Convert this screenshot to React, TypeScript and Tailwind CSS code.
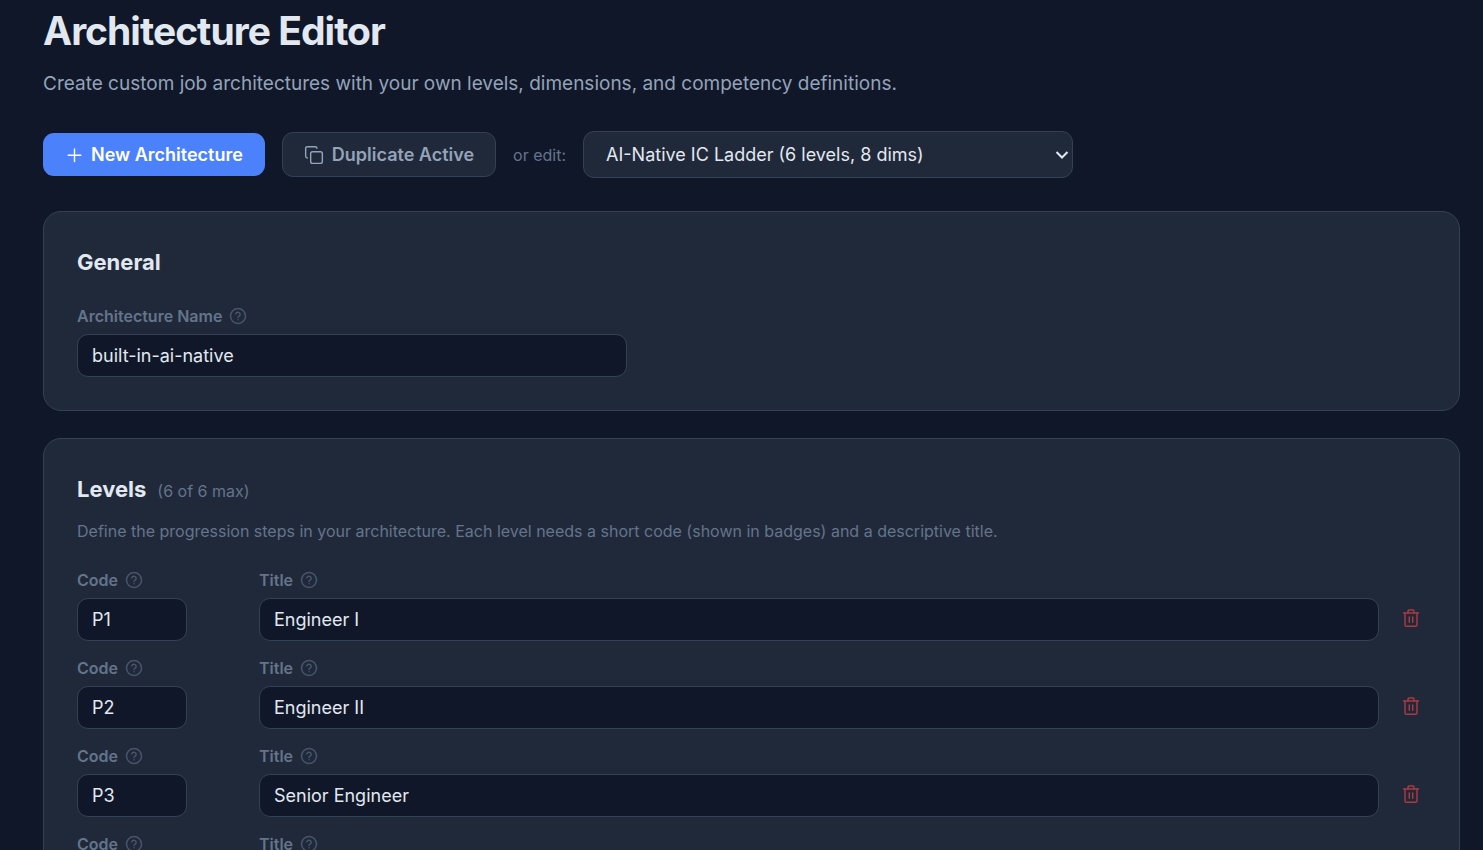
import { useId, useState } from "react";

type Level = { code: string; title: string };

const initialLevels: Level[] = [
  { code: "P1", title: "Engineer I" },
  { code: "P2", title: "Engineer II" },
  { code: "P3", title: "Senior Engineer" },
  { code: "P4", title: "Staff Engineer" },
];

function PlusIcon() {
  return (
    <svg className="size-[18px]" viewBox="0 0 18 18" fill="none" stroke="currentColor" strokeWidth="1.4" strokeLinecap="round" aria-hidden="true">
      <path d="M9.500 3v12.500M3.200 9.300h12.600" />
    </svg>
  );
}

function CopyIcon() {
  return (
    <svg className="size-5" viewBox="0 0 24 24" fill="none" stroke="currentColor" strokeWidth="1.7" strokeLinecap="round" strokeLinejoin="round" aria-hidden="true">
      <rect x="8" y="8" width="14" height="14" rx="2.200" />
      <path d="M4 15.500c-1.100 0-2-.9-2-2V4c0-1.100.9-2 2-2h9.500c1.100 0 2 .9 2 2" />
    </svg>
  );
}

function HelpIcon() {
  return (
    <svg className="size-[18px] text-[#475569]" viewBox="0 0 24 24" fill="none" stroke="currentColor" strokeWidth="2" strokeLinecap="round" strokeLinejoin="round" aria-hidden="true">
      <circle cx="12" cy="12" r="10" />
      <path d="M9.1 9a3 3 0 0 1 5.8 1c0 2-2.9 2.6-2.9 4" />
      <path d="M12 17h.01" />
    </svg>
  );
}

function TrashIcon() {
  return (
    <svg className="size-[20px]" viewBox="0 0 20 20" fill="none" stroke="currentColor" strokeWidth="1.5" strokeLinecap="round" strokeLinejoin="round" aria-hidden="true">
      <path d="M2.500 5h15" />
      <path d="M4 5v12c0 .8.600 1.300 1.300 1.300h9.400c.7 0 1.300-.5 1.300-1.300V5" />
      <path d="M7 5V3.300c0-.7.5-1.200 1.200-1.200h3.600c.7 0 1.200.5 1.200 1.200V5" />
      <path d="M8.300 9v5.300M11.700 9v5.300" />
    </svg>
  );
}

function Field({ label, value, className, onChange }: { label: string; value: string; className: string; onChange: (v: string) => void }) {
  const id = useId();
  return (
    <div className={className}>
      <div className="mb-[6px] flex h-6 items-center gap-[7px]">
        <label htmlFor={id} className="text-[16px] font-semibold text-[#64748b]">
          {label}
        </label>
        <HelpIcon />
      </div>
      <input
        id={id}
        type="text"
        value={value}
        onChange={(e) => onChange(e.target.value)}
        className="block h-[43px] w-full rounded-[11px] border border-[#334155] bg-[#101729] px-[14px] text-[18px] text-[#e2e8f0] outline-none focus:border-[#4b82fb]"
      />
    </div>
  );
}

export default function App() {
  const [name, setName] = useState("built-in-ai-native");
  const [levels, setLevels] = useState(initialLevels);

  const update = (index: number, patch: Partial<Level>) =>
    setLevels(levels.map((level, i) => (i === index ? { ...level, ...patch } : level)));

  return (
    <main className="min-h-screen bg-[#101729] pt-[7px] pr-[23px] pb-7 pl-[43px] font-['Inter',sans-serif] text-[#e2e8f0]">
      <h1 className="text-[39px] leading-[48px] font-bold tracking-tight">Architecture Editor</h1>
      <p className="mt-[14px] text-[19px] leading-[30px] text-[#94a3b8]">
        Create custom job architectures with your own levels, dimensions, and competency definitions.
      </p>

      <div className="mt-8 flex flex-wrap items-center gap-[17px]">
        <button type="button" className="flex h-[43px] items-center gap-2 rounded-[11px] bg-[#4b82fb] px-[22px] text-[18px] font-semibold text-white">
          <PlusIcon />
          New Architecture
        </button>
        <button type="button" className="flex h-[45px] items-center gap-2 rounded-[11px] border border-[#334155] bg-[#20293a] px-[21px] text-[18px] font-semibold text-[#94a3b8]">
          <CopyIcon />
          Duplicate Active
        </button>
        <label htmlFor="architecture" className="text-[16px] text-[#64748b]">
          or edit:
        </label>
        <div className="relative w-[490px] max-w-full">
          <select
            id="architecture"
            className="block h-[47px] w-full appearance-none rounded-[11px] border border-[#334155] bg-[#20293a] pr-8 pl-[22px] text-[18px] text-[#e2e8f0]"
          >
            <option>AI-Native IC Ladder (6 levels, 8 dims)</option>
          </select>
          <svg
            className="pointer-events-none absolute top-[19px] right-1 h-[10px] w-[14px]"
            viewBox="0 0 14 10"
            fill="none"
            stroke="currentColor"
            strokeWidth="2"
            aria-hidden="true"
          >
            <path d="M1.500 2L7 7.500L12.500 2" />
          </svg>
        </div>
      </div>

      <section className="mt-[33px] rounded-[18px] border border-[#334155] bg-[#20293a] p-[33px]">
        <h2 className="text-[22px] leading-[34px] font-bold">General</h2>
        <Field label="Architecture Name" value={name} onChange={setName} className="mt-[25px] max-w-[550px]" />
      </section>

      <section className="mt-[27px] rounded-[18px] border border-[#334155] bg-[#20293a] p-[33px]">
        <div className="flex items-baseline gap-[11px]">
          <h2 className="text-[22px] leading-[34px] font-bold">Levels</h2>
          <span className="text-[16px] text-[#64748b]">(6 of 6 max)</span>
        </div>
        <p className="mt-[11px] text-[16px] leading-[28px] text-[#64748b]">
          Define the progression steps in your architecture. Each level needs a short code (shown in badges) and a descriptive title.
        </p>
        <div className="mt-[23px] flex flex-col gap-[15px]">
          {levels.map((level, i) => (
            <div key={i} className="flex items-end gap-[17px]">
              <div className="w-[165px] shrink-0">
                <Field label="Code" value={level.code} onChange={(code) => update(i, { code })} className="w-[110px]" />
              </div>
              <Field label="Title" value={level.title} onChange={(title) => update(i, { title })} className="min-w-0 flex-1" />
              <button
                type="button"
                aria-label="Remove level"
                onClick={() => setLevels(levels.filter((_, j) => j !== i))}
                className="mb-2 flex size-[30px] items-center justify-center text-[#a73a43]"
              >
                <TrashIcon />
              </button>
            </div>
          ))}
        </div>
      </section>
    </main>
  );
}
